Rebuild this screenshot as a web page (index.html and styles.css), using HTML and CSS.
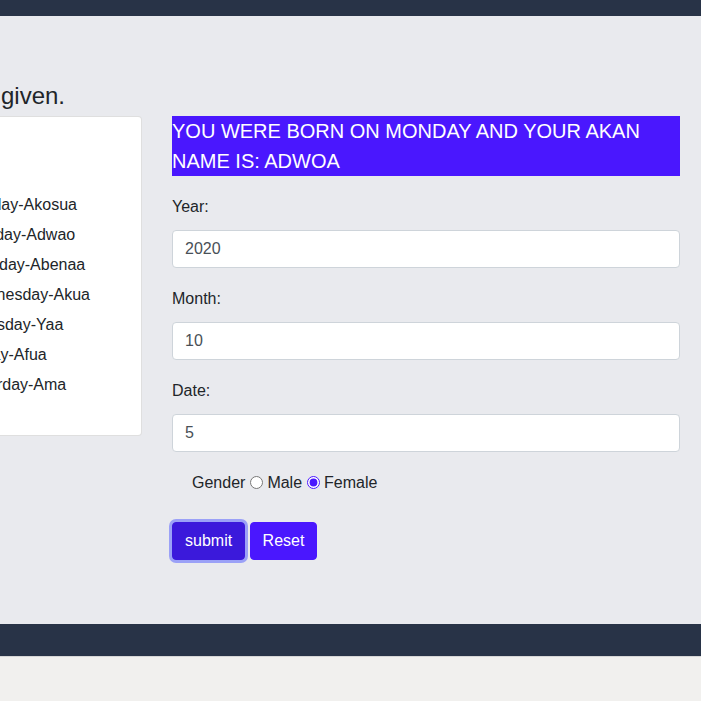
FILE: index.html
```html
<!DOCTYPE html>
<html lang="en">
<head>
<meta charset="utf-8">
<title>Akan Names</title>
<link rel="stylesheet" href="styles.css">
</head>
<body>
<header class="topbar"></header>
<main class="content">
  <h2 class="intro">Enter your birthday details below and your Akan name will be given.</h2>
  <div class="row">
    <aside class="card">
      <h4 class="card-title">Akan names</h4>
      <ul class="names">
        <li>Sunday-Akosua</li>
        <li>Monday-Adwao</li>
        <li>Tuesday-Abenaa</li>
        <li>Wednesday-Akua</li>
        <li>Thursday-Yaa</li>
        <li>Friday-Afua</li>
        <li>Saturday-Ama</li>
      </ul>
    </aside>
    <section class="form-col">
      <p class="result">YOU WERE BORN ON MONDAY AND YOUR AKAN NAME IS: ADWOA</p>
      <form class="form">
        <label class="label" for="year">Year:</label>
        <input class="field" id="year" type="text" value="2020">
        <label class="label" for="month">Month:</label>
        <input class="field" id="month" type="text" value="10">
        <label class="label" for="date">Date:</label>
        <input class="field" id="date" type="text" value="5">
        <div class="gender">Gender<input type="radio" name="g" class="radio">Male<input type="radio" name="g" class="radio" checked>Female</div>
        <div class="buttons"><button type="button" class="btn btn-focus">submit</button> <button type="reset" class="btn">Reset</button></div>
      </form>
    </section>
  </div>
</main>
<footer class="footbar"></footer>
<div class="below"></div>
</body>
</html>
```
FILE: styles.css
```css
html, body {
  margin: 0;
  padding: 0;
}
body {
  font-family: "Liberation Sans", Arial, sans-serif;
  font-size: 16px;
  line-height: 1.5;
  color: #212529;
  background: #f1f0ee;
  overflow: hidden;
  height: 701px;
}
.topbar {
  height: 16px;
  background: #283347;
}
.content {
  background: #e9eaee;
  height: 608px;
  padding-top: 65px;
  box-sizing: border-box;
}
.intro {
  margin: 0 0 6px -700px;
  width: 765px;
  text-align: right;
  white-space: nowrap;
  font-size: 24px;
  font-weight: normal;
  line-height: 29px;
  color: #212529;
}
.row {
  display: flex;
  gap: 30px;
  align-items: flex-start;
  margin-left: -97px;
}
.card {
  width: 239px;
  flex: none;
  box-sizing: border-box;
  height: 320px;
  background: #fff;
  border: 1px solid rgba(0, 0, 0, 0.125);
  border-radius: 4px;
  padding: 21px 20px 20px;
}
.card-title {
  margin: 0;
  height: 52px;
  font-size: 20px;
  font-weight: 500;
  visibility: hidden;
}
.names {
  list-style: none;
  margin: 0;
  padding: 0 0 0 40px;
  white-space: nowrap;
}
.names li {
  line-height: 30px;
}
.form-col {
  width: 508px;
  flex: none;
}
.result {
  margin: 0 0 18px;
  background: #4a17fe;
  color: #fff;
  font-size: 20px;
  line-height: 30px;
}
.form {
  display: flex;
  flex-direction: column;
  align-items: flex-start;
}
.label {
  display: block;
  line-height: 24px;
  padding-top: 1px;
  margin-bottom: 11px;
}
.field {
  display: block;
  width: 100%;
  height: 38px;
  box-sizing: border-box;
  padding: 6px 12px;
  font-family: inherit;
  font-size: 16px;
  color: #495057;
  background: #fff;
  border: 1px solid #ced4da;
  border-radius: 4px;
  margin: 0 0 18px;
}
.gender {
  line-height: 24px;
  padding-left: 20px;
  padding-top: 1px;
  margin-bottom: 27px;
}
.radio {
  accent-color: #4a17fe;
  margin: 0 4px 0 5px;
  vertical-align: -1px;
}
.btn {
  font-family: inherit;
  font-size: 16px;
  line-height: 24px;
  padding: 6px 12px;
  border: 1px solid #4a17fe;
  border-radius: 4px;
  background: #4a17fe;
  color: #fff;
}
.btn-focus {
  background: #3b19db;
  border-color: #3b19db;
  box-shadow: 0 0 0 3px #9ba1f7;
}
.footbar {
  height: 32px;
  background: #283347;
  border-bottom: 1px solid #d6d6d6;
}
```
